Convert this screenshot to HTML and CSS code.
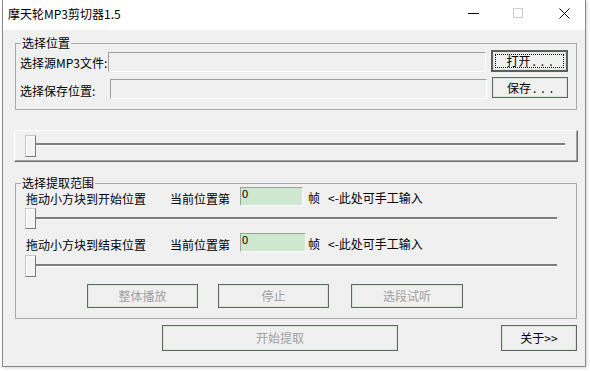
FILE: index.html
```html
<!DOCTYPE html>
<html lang="zh-CN">
<head>
<meta charset="utf-8">
<title>摩天轮MP3剪切器1.5</title>
<link rel="stylesheet" href="styles.css">
</head>
<body>
<div class="window">
  <div class="titlebar">
    <span class="title">摩天轮MP3剪切器1.5</span>
    <svg class="tb-icon tb-min" viewBox="0 0 11 30" width="11" height="30"><line x1="0" y1="13.5" x2="11" y2="13.5" stroke="#000" stroke-width="1"/></svg>
    <svg class="tb-icon tb-max" viewBox="0 0 11 30" width="11" height="30"><rect x="0.5" y="8.5" width="9" height="9" fill="none" stroke="#cccccc" stroke-width="1"/></svg>
    <svg class="tb-icon tb-close" viewBox="0 0 11 30" width="11" height="30"><path d="M0.5 8.5 L10.5 18.5 M10.5 8.5 L0.5 18.5" stroke="#000" stroke-width="1" fill="none"/></svg>
  </div>
  <div class="client">
    <div class="group g1">
      <span class="legend">选择位置</span>
      <div class="prow prow1">
        <span class="plabel pl1">选择源MP3文件:</span>
        <div class="field f1"></div>
        <button class="btn btn-open focus">打开<span class="dots">...</span></button>
      </div>
      <div class="prow prow2">
        <span class="plabel pl2">选择保存位置:</span>
        <div class="field f2"></div>
        <button class="btn btn-save">保存<span class="dots">...</span></button>
      </div>
    </div>

    <div class="mslider">
      <div class="track mtrack"></div>
      <div class="thumb mthumb"></div>
    </div>

    <div class="group g2">
      <span class="legend">选择提取范围</span>
      <div class="rrow">
        <span class="rlabel ra">拖动小方块到开始位置</span>
        <span class="rlabel rb">当前位置第</span>
        <div class="gin gin1">0</div>
        <span class="note n1"><span class="zhen">帧</span>&lt;-此处可手工输入</span>
      </div>
      <div class="rslider rs1">
        <div class="track rtrack"></div>
        <div class="thumb rthumb"></div>
      </div>
      <div class="rrow rrow2">
        <span class="rlabel ra">拖动小方块到结束位置</span>
        <span class="rlabel rb">当前位置第</span>
        <div class="gin gin2">0</div>
        <span class="note n2"><span class="zhen">帧</span>&lt;-此处可手工输入</span>
      </div>
      <div class="rslider rs2">
        <div class="track rtrack"></div>
        <div class="thumb rthumb rthumb2"></div>
      </div>
      <div class="playrow">
        <button class="btn pbtn dis" disabled>整体播放</button>
        <button class="btn pbtn dis stop" disabled>停止</button>
        <button class="btn pbtn dis seg" disabled>选段试听</button>
      </div>
    </div>

    <div class="bottomrow">
      <button class="btn dis extract" disabled>开始提取</button>
      <button class="btn about">关于&gt;&gt;</button>
    </div>
  </div>
</div>
</body>
</html>
```

FILE: styles.css
```css
* { box-sizing: border-box; margin: 0; padding: 0; }
html, body { width: 590px; height: 371px; overflow: hidden; }
body {
  background: #ffffff;
  font-family: "Noto Sans CJK SC", "Noto Sans", sans-serif;
  font-size: 12px;
  color: #000;
}

.window {
  margin-left: 2px;
  width: 584px;
  height: 367px;
  border: 1px solid #8a8a8a;
  border-top: 0;
  background: #f0f0f0;
  display: flex;
  flex-direction: column;
  box-shadow: 1px 1px 3px rgba(0,0,0,0.18);
}

.titlebar {
  height: 30px;
  flex: none;
  background: #fff;
  display: flex;
  align-items: flex-start;
}
.title {
  flex: 1;
  padding-left: 5px;
  line-height: 27px;
  font-size: 12px;
  white-space: nowrap;
}
.tb-icon { flex: none; display: block; }
.tb-min { margin-right: 34px; }
.tb-max { margin-right: 35px; }
.tb-close { margin-right: 15px; }

.client {
  flex: 1;
  display: flex;
  flex-direction: column;
  align-items: flex-start;
}

.group {
  position: relative;
  width: 562px;
  margin-left: 12px;
  border: 1px solid #a9a9a9;
  flex: none;
}
.legend {
  position: absolute;
  top: -8px;
  left: 5px;
  padding: 0 1px;
  line-height: 14px;
  background: #f0f0f0;
  white-space: nowrap;
}

.g1 {
  margin-top: 13px;
  height: 67px;
  padding: 6px 0 0 4px;
}
.prow { display: flex; align-items: flex-start; }
.prow1 { height: 22px; }
.prow2 { height: 21px; margin-top: 5px; }
.plabel { line-height: 14px; white-space: nowrap; }
.pl1 { width: 88px; margin-top: 6px; }
.pl2 { width: 90px; margin-top: 7px; }
.field {
  height: 20px;
  margin-top: 2px;
  background: #f0f0f0;
  border: 1px solid;
  border-color: #a0a0a0 #ffffff #ffffff #a0a0a0;
}
.f1 { width: 378px; }
.f2 { width: 377px; }

.btn {
  position: relative;
  display: flex;
  align-items: center;
  justify-content: center;
  font: inherit;
  font-size: 12px;
  color: #000;
  background: #f0f0f0;
  border: 1px solid #646464;
  box-shadow: inset 0 0 0 1px #d3ead3;
  line-height: 14px;
  white-space: nowrap;
  flex: none;
}
.btn.dis { color: #a0a0a0; }
.dots { letter-spacing: 5px; margin-left: 2px; margin-right: -5px; }
.btn-open {
  margin-left: 5px;
  width: 77px;
  height: 22px;
  border: 2px solid #5e5e5e;
}
.btn-open.focus::after {
  content: "";
  position: absolute;
  left: 2px; top: 2px; right: 2px; bottom: 2px;
  border: 1px dotted #000;
}
.btn-save {
  margin-left: 5px;
  width: 76px;
  height: 21px;
}

.mslider {
  position: relative;
  margin: 20px 0 0 11px;
  width: 564px;
  height: 32px;
  flex: none;
  border: 1px solid;
  border-color: #ffffff #6c6c6c #6c6c6c #ffffff;
  box-shadow: inset -1px -1px 0 #a0a0a0;
}
.track {
  height: 3px;
  border-top: 2px solid #7d7d7d;
  border-bottom: 1px solid #ffffff;
  background: #e3e3e3;
}
.mtrack { margin: 12px 0 0 15px; width: 535px; }
.thumb {
  position: absolute;
  width: 11px;
  background: #f4f4f4;
  border: 1px solid;
  border-color: #c8c8c8 #7a7a7a #7a7a7a #c8c8c8;
  box-shadow: inset 1px 1px 0 #ffffff;
}
.mthumb { left: 10px; top: 4px; height: 22px; }

.g2 {
  margin-top: 21px;
  height: 136px;
  padding: 3px 0 0 10px;
}
.rrow { display: flex; align-items: flex-start; height: 19px; }
.rrow2 { margin-top: 4px; }
.rlabel { line-height: 14px; margin-top: 5px; white-space: nowrap; }
.ra { width: 144px; }
.rb { width: 70px; }
.gin {
  height: 19px;
  background: #cde8cf;
  border: 1px solid;
  border-color: #a0a0a0 #ffffff #ffffff #a0a0a0;
  font-family: "Liberation Sans", sans-serif;
  font-size: 11px;
  line-height: 11px;
  padding: 1px 0 0 1px;
}
.gin1 { width: 63px; }
.gin2 { width: 66px; }
.note { line-height: 14px; margin-top: 4px; white-space: nowrap; }
.n1 { margin-left: 5px; }
.n2 { margin-left: 2px; }
.zhen { margin-right: 8px; }

.rslider {
  position: relative;
  margin-left: -1px;
  width: 532px;
  padding-top: 9px;
}
.rs1 { margin-top: 2px; height: 21px; }
.rs2 { margin-top: 3px; height: 22px; }
.rtrack { margin-left: 6px; width: 526px; }
.rthumb { left: 0; top: 0; height: 21px; }
.rthumb2 { height: 22px; }

.playrow {
  display: flex;
  margin-top: 7px;
  margin-left: 61px;
}
.pbtn { width: 111px; height: 24px; }
.stop { margin-left: 20px; }
.seg { margin-left: 22px; width: 112px; }

.bottomrow {
  display: flex;
  margin-top: 6px;
  margin-left: 159px;
}
.extract { width: 236px; height: 26px; }
.about { width: 76px; height: 26px; margin-left: 103px; }
```
